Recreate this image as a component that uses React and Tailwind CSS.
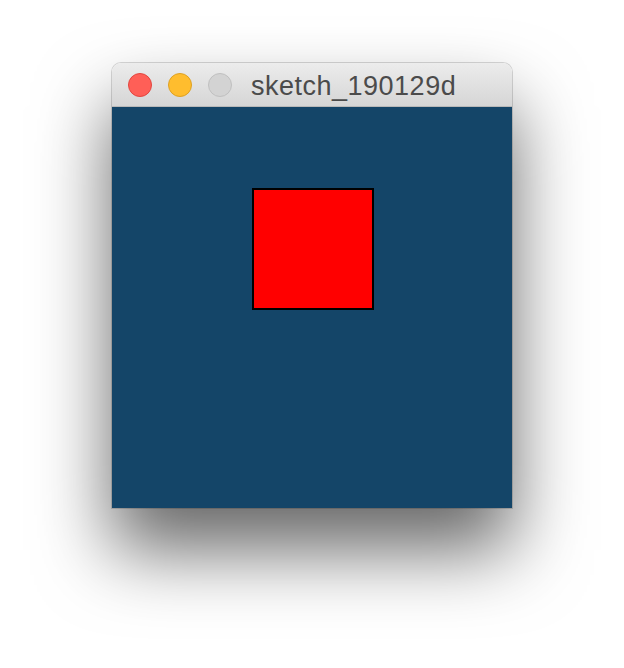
export default function App() {
  return (
    <div className="flex min-h-screen justify-center bg-white pt-[63px]" style={{ fontFamily: '"Liberation Sans", Arial, sans-serif' }}>
      <div className="flex h-[445px] w-[400px] flex-col overflow-hidden rounded-t-[9px] shadow-[0_42px_75px_rgba(0,0,0,0.6),0_0_0_1px_rgba(0,0,0,0.15)]">
        <div className="flex h-[44px] items-center border-b border-[#b9b9b9] bg-gradient-to-b from-[#ececec] to-[#d6d6d6] pl-[16px]">
          <div className="flex gap-[16px]">
            <span className="h-[24px] w-[24px] rounded-full border border-[#e2463f] bg-[#ff5f57]" />
            <span className="h-[24px] w-[24px] rounded-full border border-[#dea123] bg-[#ffbd2e]" />
            <span className="h-[24px] w-[24px] rounded-full border border-[#c0c0c0] bg-[#d3d3d3]" />
          </div>
          <span className="ml-[19px] mt-[3px] text-[27px] leading-none tracking-[0.5px] text-[#4b4b4b]">sketch_190129d</span>
        </div>
        <div className="flex-1 bg-[#144568] pl-[140px] pt-[81px]">
          <div className="h-[122px] w-[122px] border-2 border-black bg-[#ff0000]" />
        </div>
      </div>
    </div>
  );
}
